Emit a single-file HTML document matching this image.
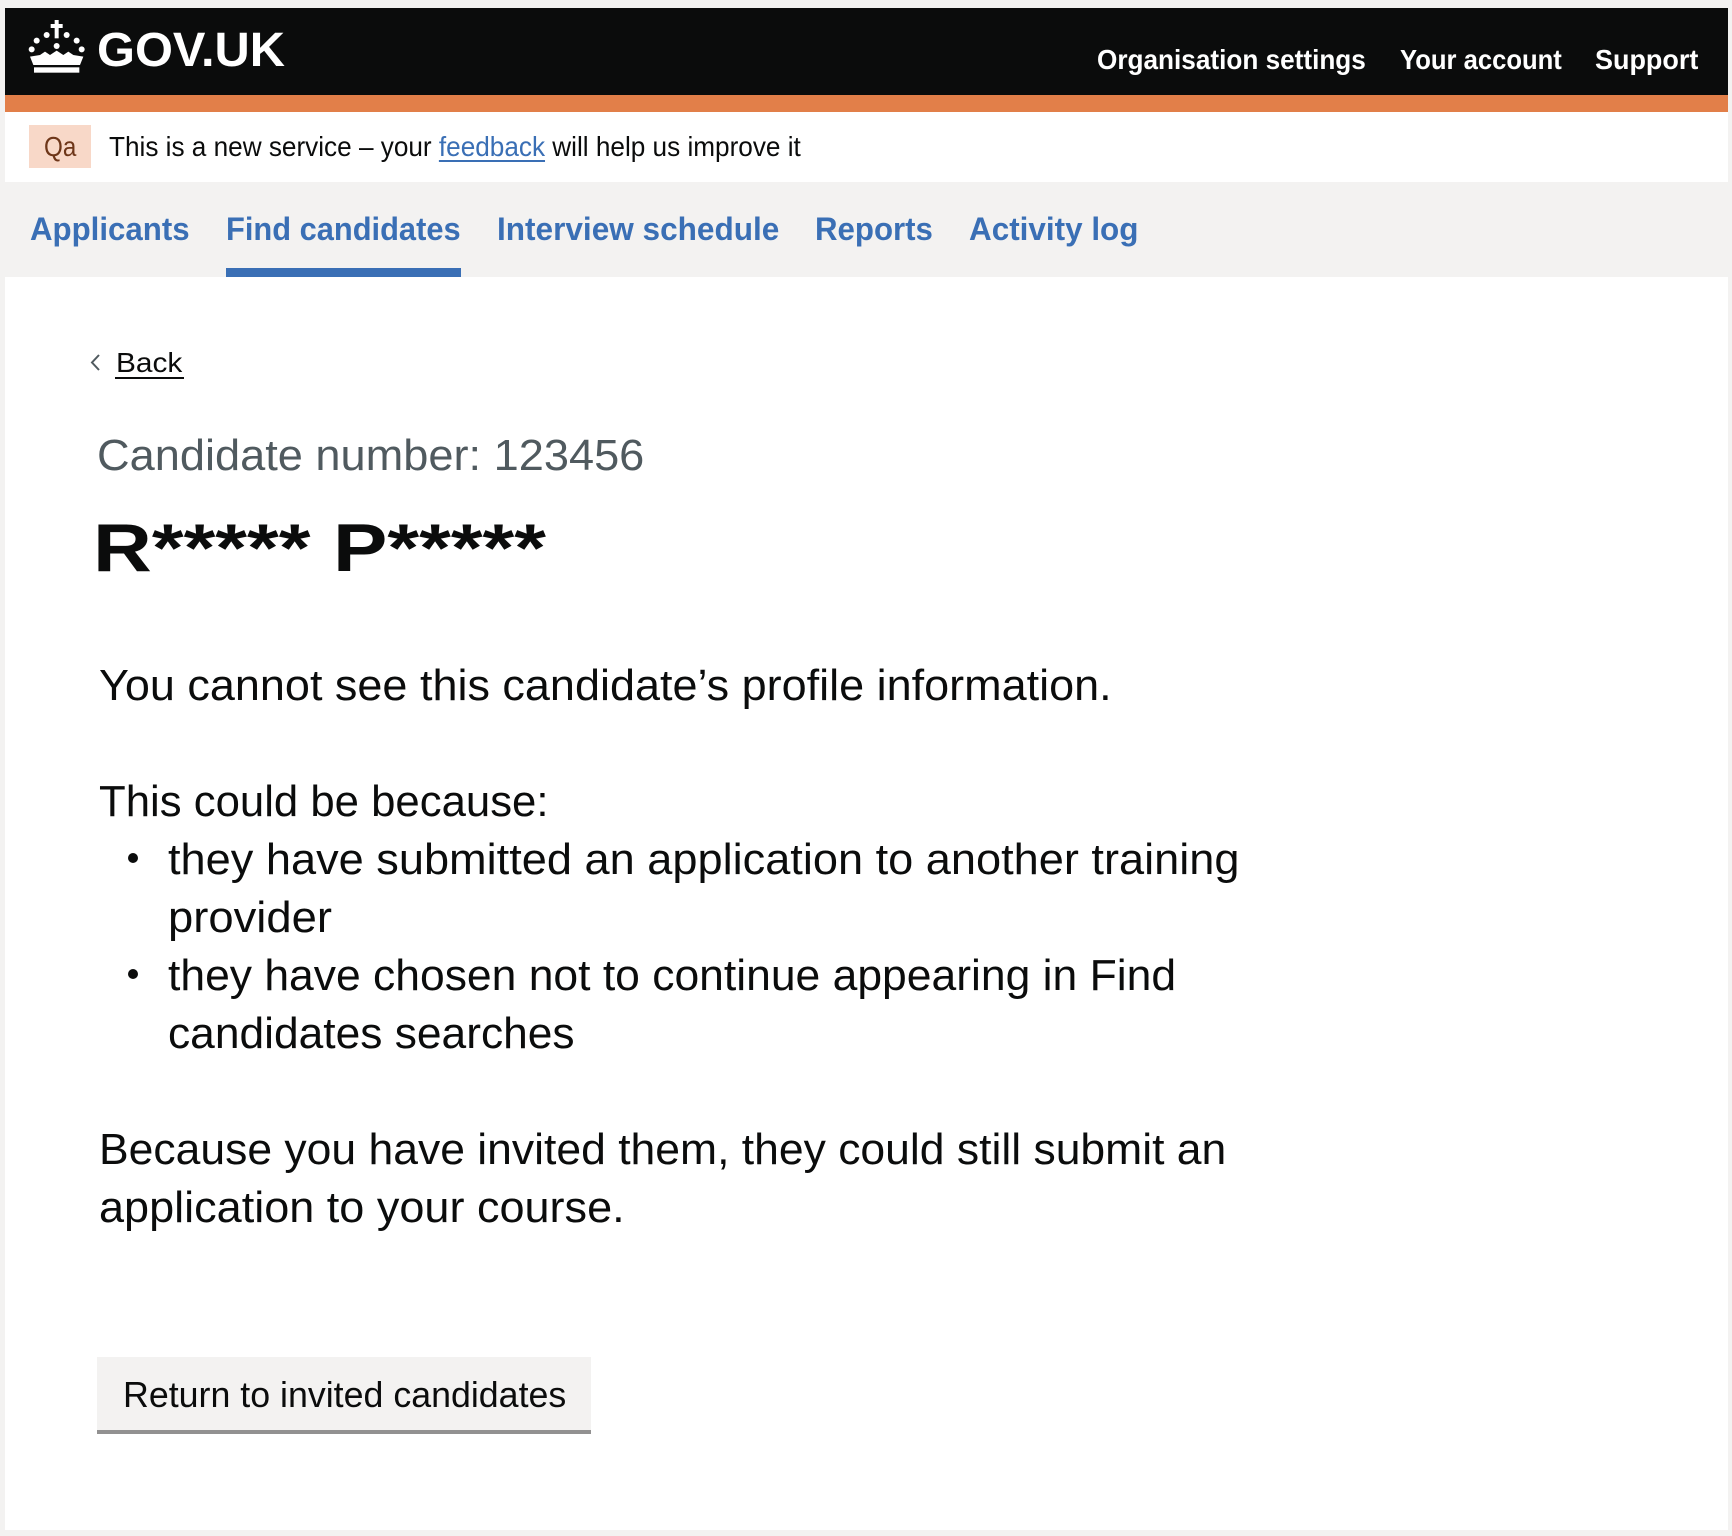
<!DOCTYPE html>
<html><head><meta charset="utf-8"><style>
html,body{margin:0;padding:0}
body{width:1732px;height:1536px;position:relative;background:#f3f2f1;overflow:hidden;font-family:"Liberation Sans",Arial,sans-serif}
.t{position:absolute;white-space:nowrap;display:inline-block;transform-origin:0 0}
.b{font-weight:bold}
</style></head><body>
<div style="position:absolute;left:5px;top:8px;width:1723px;height:1522px;background:#fff"></div>
<div style="position:absolute;left:5px;top:8px;width:1723px;height:87px;background:#0b0c0c"></div>
<div style="position:absolute;left:5px;top:95px;width:1723px;height:17px;background:#e27f49"></div>
<div style="position:absolute;left:5px;top:182px;width:1723px;height:95px;background:#f3f2f1"></div>
<div style="position:absolute;left:226px;top:268px;width:235px;height:9px;background:#3a6fb5"></div>
<svg style="position:absolute;left:20px;top:10px" width="80" height="80" viewBox="0 0 240 240" fill="#fff">
<rect x="104" y="30" width="12" height="55"/><rect x="92" y="42" width="36" height="12"/>
<circle cx="50" cy="92" r="9"/><circle cx="80" cy="75" r="9"/><circle cx="140" cy="75" r="9"/><circle cx="170" cy="92" r="9"/><circle cx="35" cy="118" r="9"/><circle cx="185" cy="118" r="9"/><circle cx="110" cy="108" r="9"/>
<path d="M30 140 L60 135 L75 125 L90 135 L110 122 L130 135 L145 125 L160 135 L190 140 L180 165 L40 165 Z"/>
<rect x="42" y="172" width="136" height="16"/>
</svg>
<span class="t b fit" style="left:97px;top:27px;font-size:48px;line-height:48px;color:#fff;--w:188">GOV.UK</span>
<span class="t b fit" style="left:1097px;top:46px;font-size:28px;line-height:28px;color:#fff;--w:269">Organisation settings</span>
<span class="t b fit" style="left:1400px;top:46px;font-size:28px;line-height:28px;color:#fff;--w:162">Your account</span>
<span class="t b fit" style="left:1595px;top:46px;font-size:28px;line-height:28px;color:#fff;--w:103">Support</span>
<div style="position:absolute;left:29px;top:125px;width:62px;height:43px;background:#f8d8c8"></div>
<span class="t fit" style="left:44px;top:133px;font-size:28px;line-height:28px;color:#6e3619;--w:32">Qa</span>
<span class="t" style="left:109px;top:133px;font-size:28px;line-height:28px;color:#0b0c0c" id="ban">This is a new service – your <span style="color:#3a6fb5;text-decoration:underline;text-underline-offset:4px">feedback</span> will help us improve it</span>
<span class="t b fit" style="left:30px;top:213px;font-size:32px;line-height:32px;color:#3a6fb5;--w:160">Applicants</span>
<span class="t b fit" style="left:226px;top:213px;font-size:32px;line-height:32px;color:#3a6fb5;--w:235">Find candidates</span>
<span class="t b fit" style="left:497px;top:213px;font-size:32px;line-height:32px;color:#3a6fb5;--w:282">Interview schedule</span>
<span class="t b fit" style="left:815px;top:213px;font-size:32px;line-height:32px;color:#3a6fb5;--w:118">Reports</span>
<span class="t b fit" style="left:969px;top:213px;font-size:32px;line-height:32px;color:#3a6fb5;--w:169">Activity log</span>
<svg style="position:absolute;left:88px;top:352px" width="16" height="22"><path d="M11 3 L4 10.5 L11 18" fill="none" stroke="#505a5f" stroke-width="2"/></svg>
<span class="t fit" style="left:116px;top:349px;font-size:28px;line-height:28px;color:#0b0c0c;--w:66">Back</span>
<div style="position:absolute;left:115px;top:377px;width:69px;height:2px;background:#0b0c0c"></div>
<span class="t fit" style="left:97px;top:434px;font-size:44px;line-height:44px;color:#505a5f;--w:547">Candidate number: 123456</span>
<span class="t b fit" style="left:93px;top:514px;font-size:68px;line-height:68px;color:#0b0c0c;--w:453">R***** P*****</span>
<span class="t fit" style="left:99px;top:664px;font-size:44px;line-height:44px;color:#0b0c0c;--w:1013">You cannot see this candidate’s profile information.</span>
<span class="t fit" style="left:99px;top:780px;font-size:44px;line-height:44px;color:#0b0c0c;--w:450">This could be because:</span>
<div style="position:absolute;left:128px;top:853px;width:10px;height:10px;border-radius:50%;background:#0b0c0c"></div>
<span class="t fit" style="left:168px;top:838px;font-size:44px;line-height:44px;color:#0b0c0c;--w:1071">they have submitted an application to another training</span>
<span class="t fit" style="left:168px;top:896px;font-size:44px;line-height:44px;color:#0b0c0c;--w:164">provider</span>
<div style="position:absolute;left:128px;top:969px;width:10px;height:10px;border-radius:50%;background:#0b0c0c"></div>
<span class="t fit" style="left:168px;top:954px;font-size:44px;line-height:44px;color:#0b0c0c;--w:1008">they have chosen not to continue appearing in Find</span>
<span class="t fit" style="left:168px;top:1012px;font-size:44px;line-height:44px;color:#0b0c0c;--w:407">candidates searches</span>
<span class="t fit" style="left:99px;top:1128px;font-size:44px;line-height:44px;color:#0b0c0c;--w:1127">Because you have invited them, they could still submit an</span>
<span class="t fit" style="left:99px;top:1186px;font-size:44px;line-height:44px;color:#0b0c0c;--w:526">application to your course.</span>
<div style="position:absolute;left:97px;top:1357px;width:494px;height:73px;background:#f3f2f1;border-bottom:4px solid #929191"></div>
<span class="t fit" style="left:123px;top:1377px;font-size:36px;line-height:36px;color:#0b0c0c;--w:443">Return to invited candidates</span>
<script>
document.querySelectorAll('.fit').forEach(function(e){var w=parseFloat(getComputedStyle(e).getPropertyValue('--w'));var o=e.offsetWidth;if(o>0)e.style.transform='scaleX('+(w/o)+')';});
var b=document.getElementById('ban');b.style.transform='scaleX('+(692/b.offsetWidth)+')';
</script>
</body></html>
